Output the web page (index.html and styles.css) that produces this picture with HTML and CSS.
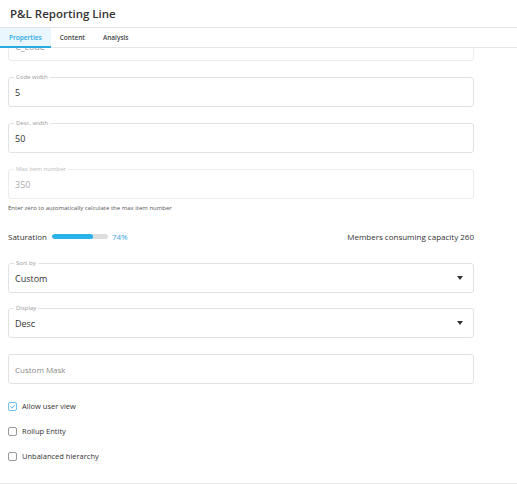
FILE: index.html
```html
<!DOCTYPE html>
<html>
<head>
<meta charset="utf-8">
<link rel="stylesheet" href="styles.css">
</head>
<body>
<div class="panel">
  <header class="header">P&amp;L Reporting Line</header>
  <nav class="tabs">
    <div class="tab active">Properties</div>
    <div class="tab">Content</div>
    <div class="tab">Analysis</div>
  </nav>
  <main class="content">
    <div class="field partial"><span class="value">C_code</span></div>
    <div class="field"><span class="label">Code width</span><span class="value">5</span></div>
    <div class="field"><span class="label">Desc. width</span><span class="value">50</span></div>
    <div class="field disabled"><span class="label">Max item number</span><span class="value">350</span></div>
    <div class="hint">Enter zero to automatically calculate the max item number</div>
    <div class="saturation">
      <div class="sat-left">
        <span>Saturation</span>
        <div class="bar"><div class="bar-fill" style="width:74%"></div></div>
        <span class="pct">74%</span>
      </div>
      <span>Members consuming capacity 260</span>
    </div>
    <div class="field select"><span class="label">Sort by</span><span class="value">Custom</span><span class="caret"></span></div>
    <div class="field select"><span class="label">Display</span><span class="value">Desc</span><span class="caret"></span></div>
    <div class="field mask"><span class="placeholder">Custom Mask</span></div>
    <div class="checks">
      <label class="check"><span class="box checked"><svg viewBox="0 0 10 10" width="9" height="9"><path d="M2 5.2 L4.2 7.3 L8.2 2.6" fill="none" stroke="#3aa8e0" stroke-width="1.3"/></svg></span>Allow user view</label>
      <label class="check"><span class="box"></span>Rollup Entity</label>
      <label class="check"><span class="box"></span>Unbalanced hierarchy</label>
    </div>
  </main>
</div>
</body>
</html>
```
FILE: styles.css
```css
* { box-sizing: border-box; }
html, body { margin: 0; padding: 0; background: #fff; }
body { font-family: "Open Sans", "Liberation Sans", sans-serif; color: #333; }
.panel { width: 517px; height: 484px; display: flex; flex-direction: column; overflow: hidden; }
.header {
  height: 28px; line-height: 27px; padding-left: 10px;
  font-size: 11.5px; font-weight: 600; color: #333;
  border-bottom: 1px solid #e6e6e6;
}
.tabs { display: flex; height: 20px; border-bottom: 1px solid #e6e6e6; }
.tab {
  padding: 0 9px; font-size: 6.5px; font-weight: 600; color: #444;
  line-height: 19px; height: 19px;
}
.tab.active { background: #e9f6fd; color: #29a9e1; border-bottom: 2px solid #29abe2; height: 20px; }
.content {
  flex: 1; overflow: hidden;
  padding: 0 43px 0 8px;
  display: flex; flex-direction: column;
  border-bottom: 1px solid #e6e6e6;
}
.field {
  position: relative; height: 30px; flex: none;
  border: 1px solid #e2e2e2; border-radius: 3px;
  display: flex; align-items: center; padding: 0 6px;
  margin-top: 16px;
}
.field.partial { margin-top: -17px; border-color: #ececec; }
.field.partial .value { color: #999; }
.label {
  position: absolute; top: -4px; left: 5px; padding: 0 2px;
  background: #fff; font-size: 6px; line-height: 7px; color: #999;
}
.value { font-size: 9px; color: #333; }
.disabled { border-color: #ececec; }
.disabled .value { color: #aaa; }
.disabled .label { color: #bbb; }
.hint { font-size: 6px; color: #555; margin-top: 5px; line-height: 8px; }
.saturation {
  display: flex; justify-content: space-between; align-items: center;
  height: 12px; margin-top: 18px; font-size: 8px; color: #333;
}
.sat-left { display: flex; align-items: center; }
.bar { width: 56px; height: 5px; background: #ddd; border-radius: 3px; margin-left: 5px; overflow: hidden; }
.bar-fill { height: 100%; background: #29b3e8; border-radius: 3px; }
.pct { color: #3aa3dc; margin-left: 4px; }
.select { justify-content: space-between; margin-top: 21px; }
.select + .select { margin-top: 15px; }
.caret { width: 0; height: 0; border-left: 3px solid transparent; border-right: 3px solid transparent; border-top: 4px solid #333; margin-right: 4px; }
.mask { margin-top: 16px; }
.placeholder { font-size: 8px; color: #888; }
.checks { display: flex; flex-direction: column; gap: 13px; margin-top: 16px; }
.check { display: flex; align-items: center; font-size: 7.5px; color: #333; height: 12px; }
.box { width: 9px; height: 9px; border: 1px solid #999; border-radius: 2px; margin-right: 5px; display: flex; align-items: center; justify-content: center; }
.box.checked { border-color: #6cc4ee; }
.box svg { display: block; }
```
